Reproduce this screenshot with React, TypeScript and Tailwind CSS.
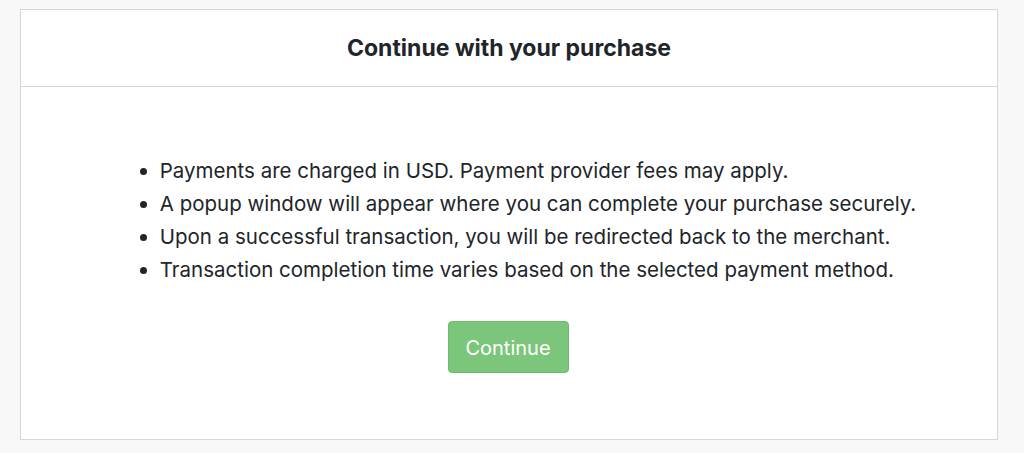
import React from "react";

const items = [
  "Payments are charged in USD. Payment provider fees may apply.",
  "A popup window will appear where you can complete your purchase securely.",
  "Upon a successful transaction, you will be redirected back to the merchant.",
  "Transaction completion time varies based on the selected payment method.",
];

export default function App() {
  return (
    <div
      className="min-h-[453px] bg-[#f8f8f8] pl-[20px] pr-[26px] pt-[9px] pb-[13px] text-[#212529]"
      style={{ fontFamily: 'Inter, "Liberation Sans", Arial, sans-serif' }}
    >
      <div className="flex flex-col border border-[#d6d6d6] bg-white">
        <div className="flex h-[77px] items-center justify-center border-b border-[#d6d6d6]">
          <h1 className="text-[23px] font-bold leading-none">Continue with your purchase</h1>
        </div>
        <div className="flex h-[352px] flex-col items-center pt-[67px]">
          <ul className="list-disc pl-[58px] text-[20.5px] leading-[33px]">
            {items.map((t) => (
              <li key={t}>{t}</li>
            ))}
          </ul>
          <button className="mr-[2px] mt-[35px] h-[52px] w-[121px] rounded-[4px] border border-[#6cbc6c] bg-[#7bc67b] pt-[2px] text-[20px] text-white">
            Continue
          </button>
        </div>
      </div>
    </div>
  );
}
